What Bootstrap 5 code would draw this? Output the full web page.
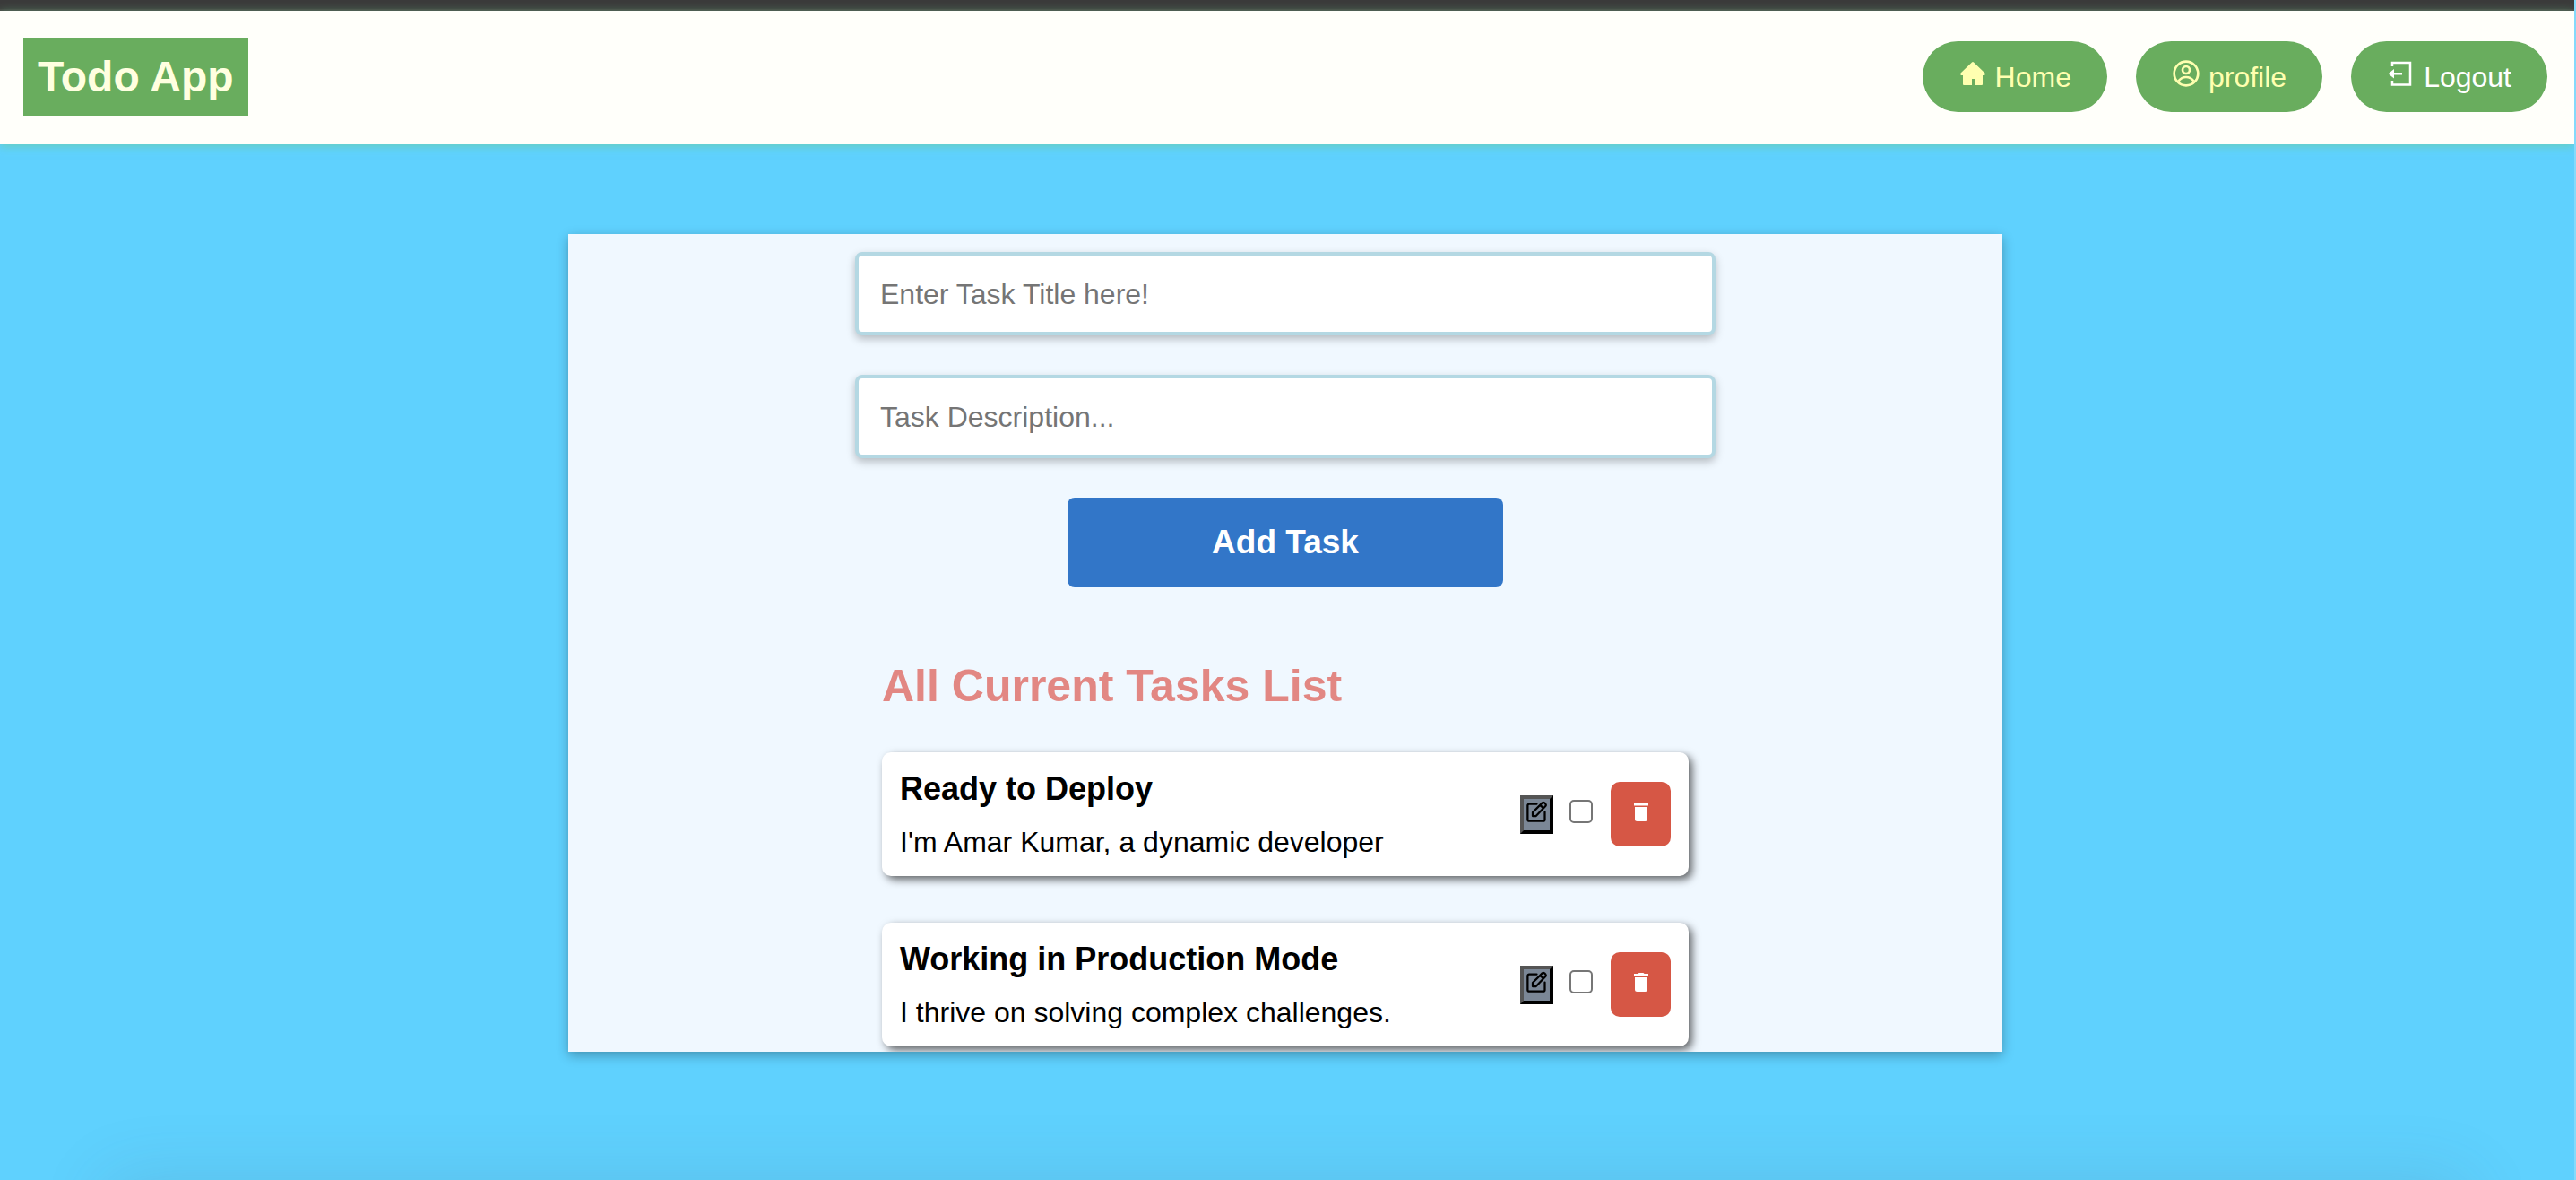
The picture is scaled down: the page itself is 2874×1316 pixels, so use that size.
<!DOCTYPE html>
<html lang="en">
<head>
<meta charset="utf-8">
<meta name="viewport" content="width=device-width, initial-scale=1">
<title>Todo App</title>
<link href="https://cdn.jsdelivr.net/npm/bootstrap@5.3.0/dist/css/bootstrap.min.css" rel="stylesheet">
<style>
body { font-family: "Liberation Sans", Arial, sans-serif; font-size: 32px; line-height: 36px; color: #000; background: #5fd1fe; border-right: 2px solid #83dafb; }
.top-strip { height: 12px; background: #3b3b3b; border-bottom: 2px solid #464343; }
.site-header { background: #fffffa; padding: 30px 30px 32px 26px; box-shadow: 0 2px 10px rgba(110, 205, 140, .6); }
.brand { background: #69ad5e; color: #ffffe0; font-size: 48px; line-height: 55px; font-weight: 700; padding: 16px; text-decoration: none; }
.site-nav { gap: 32px; }
.pill { background: #69ad5e; color: #ffffb0; padding: 20px 40px 21px; border-radius: 40px; gap: 9px; text-decoration: none; }
.pill svg { width: 32px; height: 32px; margin-bottom: 6px; }
.pill span { padding-top: 2px; line-height: 34px; }
.pill-light { color: #fff; }
main { padding: 100px 24px 100px 20px; }
.panel { width: 100%; max-width: 1600px; background: #f0f8ff; padding: 20px 20px 6px; box-shadow: 0 4px 12px rgba(0, 0, 0, .3); overflow: hidden; }
.task-form { gap: 44px; max-width: 960px; }
.task-input { border: 4px solid #b4d8e3; border-radius: 8px; padding: 25px 24px 23px; line-height: 37px; background: #fff; box-shadow: 0 4px 10px rgba(0, 0, 0, .25); width: 100%; outline: 0; }
.task-input::placeholder { color: #757575; opacity: 1; }
.add-btn { background: #3276c8; color: #fff; border-radius: 8px; font-size: 37px; font-weight: 700; line-height: 44px; padding: 28px 0; width: 486px; max-width: 100%; border: 0; }
.task-list { max-width: 900px; }
.list-title { color: #e28783; font-size: 50px; line-height: 58px; font-weight: 700; margin: 81px 0 45px; }
.tasks { gap: 52px; }
.task { background: #fff; border-radius: 10px; padding: 19px 20px; box-shadow: 4px 4px 10px rgba(0, 0, 0, .6); min-height: 138px; }
.task h3 { font-size: 36px; line-height: 42px; font-weight: 700; margin: 0 0 20px; }
.task p { margin: 0; line-height: 36px; }
.task-actions { gap: 18px; }
.edit-btn { background: #7b8796; border: 4px solid #000; border-top-color: #555; border-left-color: #555; width: 37px; height: 43px; padding: 0 0 6px; }
.edit-btn svg { width: 27px; height: 27px; flex: none; }
.done-box { appearance: none; width: 26px; height: 26px; border: 2px solid #767676; border-radius: 5px; background: #fff; margin: 0 2px 6px 0; }
.done-box:checked { background: #0075ff; }
.del-btn { background: #d65745; color: #fff; border: 0; border-radius: 10px; width: 67px; height: 72px; }
.del-btn svg { width: 24px; height: 24px; margin-bottom: 6px; }
.page-foot { margin: 0 180px; height: 0; box-shadow: 0 60px 80px 60px rgba(70, 80, 90, .14); }
</style>
</head>
<body class="d-flex flex-column min-vh-100">
<svg class="d-none">
  <symbol id="i-edit" viewBox="0 0 24 24"><g fill="none" stroke="currentColor" stroke-width="2" stroke-linejoin="round" stroke-linecap="round"><path d="M12 4H4.500A1.500 1.500 0 0 0 3 5.500V19.500A1.500 1.500 0 0 0 4.500 21H18.500A1.500 1.500 0 0 0 20 19.500V12"/><path d="M8 16V12.500L17.500 3Q18.600 2.200 19.700 3L20.700 4Q21.600 5.200 20.700 6.300L11.300 16ZM15.500 5.200L18.500 8.200"/></g></symbol>
  <symbol id="i-trash" viewBox="0 0 24 24"><path fill="currentColor" d="M4 3H8.500Q9 2 10 2H14Q15 2 15.500 3H20V5.500H4ZM5 7H19V20.500Q19 23 16.500 23H7.500Q5 23 5 20.500Z"/></symbol>
</svg>
<div class="top-strip"></div>
<header class="site-header d-flex flex-wrap justify-content-between align-items-center gap-3">
  <a class="brand" href="#">Todo App</a>
  <nav class="site-nav d-flex flex-wrap align-items-center">
    <a class="pill d-flex align-items-center" href="#">
      <svg viewBox="0 0 32 32" aria-hidden="true"><path fill="currentColor" d="M15 3.500Q16 2.500 17 3.500L29.500 15.500Q30.500 17 29 18H27V28Q27 29 26 29H18V22H15V29H6Q5 29 5 28V18H3Q1.500 17 2.500 15.500Z"/></svg>
      <span>Home</span>
    </a>
    <a class="pill d-flex align-items-center" href="#">
      <svg viewBox="0 0 24 24" aria-hidden="true"><g fill="none" stroke="currentColor" stroke-width="2"><circle cx="12" cy="12" r="10"/><circle cx="12" cy="9" r="3"/><path d="M5.500 18.500C7.200 16.200 9.500 15 12 15S16.800 16.200 18.500 18.500"/></g></svg>
      <span>profile</span>
    </a>
    <a class="pill pill-light d-flex align-items-center" href="#">
      <svg viewBox="0 0 32 32" aria-hidden="true"><path fill="none" stroke="currentColor" stroke-width="2.500" d="M6 8V4H26V28.500H6V24M7 16.300H17"/><path fill="currentColor" d="M1.500 16.300L8 11V21.600Z"/></svg>
      <span>Logout</span>
    </a>
  </nav>
</header>
<main class="flex-grow-1">
  <section class="panel mx-auto">
    <form class="task-form d-flex flex-column align-items-center mx-auto" onsubmit="return false">
      <input class="task-input" type="text" aria-label="Task title" placeholder="Enter Task Title here!">
      <input class="task-input" type="text" aria-label="Task description" placeholder="Task Description...">
      <button class="add-btn" type="submit">Add Task</button>
    </form>
    <div class="task-list mx-auto">
      <h2 class="list-title">All Current Tasks List</h2>
      <ul class="tasks list-unstyled d-flex flex-column mb-0">
        <li class="task d-flex justify-content-between align-items-center">
          <div><h3>Ready to Deploy</h3><p>I'm Amar Kumar, a dynamic developer</p></div>
          <div class="task-actions d-flex align-items-center">
            <button class="edit-btn d-flex justify-content-center align-items-center" type="button" aria-label="Edit"><svg><use href="#i-edit"/></svg></button>
            <input class="done-box" type="checkbox" aria-label="Done: Ready to Deploy">
            <button class="del-btn d-flex justify-content-center align-items-center" type="button" aria-label="Delete"><svg><use href="#i-trash"/></svg></button>
          </div>
        </li>
        <li class="task d-flex justify-content-between align-items-center">
          <div><h3>Working in Production Mode</h3><p>I thrive on solving complex challenges.</p></div>
          <div class="task-actions d-flex align-items-center">
            <button class="edit-btn d-flex justify-content-center align-items-center" type="button" aria-label="Edit"><svg><use href="#i-edit"/></svg></button>
            <input class="done-box" type="checkbox" aria-label="Done: Working in Production Mode">
            <button class="del-btn d-flex justify-content-center align-items-center" type="button" aria-label="Delete"><svg><use href="#i-trash"/></svg></button>
          </div>
        </li>
      </ul>
    </div>
  </section>
</main>
<footer class="page-foot"></footer>
<script src="https://cdn.jsdelivr.net/npm/bootstrap@5.3.0/dist/js/bootstrap.bundle.min.js"></script>
</body>
</html>
